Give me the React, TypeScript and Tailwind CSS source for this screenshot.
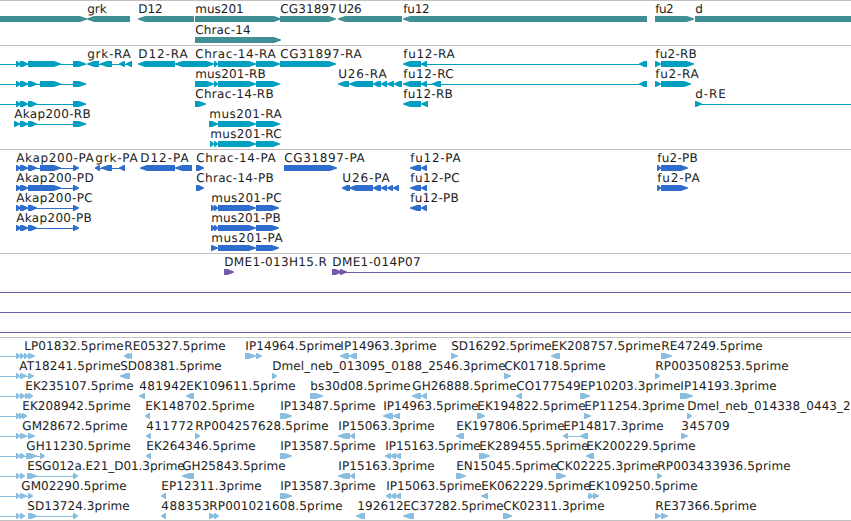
import React from 'react';

type Block = [number, number];

interface Feature {
  name?: string;
  // label start and end
  at?: Block;
  dir?: 'fwd' | 'rev';
  blocks?: Block[];
  line?: Block;
}

interface Track {
  id: string;
  color: string;
  rowClass: string;
  padClass: string;
  rows: Feature[][];
}

const fwd = (name: string, from: number, to: number, blocks: Block[], line?: Block): Feature => ({
  name,
  at: [from, to],
  dir: 'fwd',
  blocks,
  line,
});

const rev = (name: string, from: number, to: number, blocks: Block[], line?: Block): Feature => ({
  name,
  at: [from, to],
  dir: 'rev',
  blocks,
  line,
});

// Exons shared by several transcripts
const MUS: Block[] = [[218, 256], [256, 280]];
const MUS_CDS: Block[] = [[218, 256], [256, 279]];

const genes: Feature[][] = [
  [
    fwd('', 0, 0, [[0, 87]]),
    rev('grk', 87, 106, [[87, 130]]),
    rev('D12', 138, 162, [[138, 194]]),
    fwd('mus201', 195, 243, [[195, 281]]),
    fwd('CG31897', 280, 336, [[280, 336]]),
    rev('U26', 338, 361, [[338, 402]]),
    rev('fu12', 403, 429, [[403, 647]]),
    fwd('fu2', 655, 673, [[655, 694]]),
    fwd('d', 695, 703, [[695, 870]]),
  ],
  [fwd('Chrac-14', 195, 250, [[195, 281]])],
];

const transcripts: Feature[][] = [
  [
    fwd('', 0, 0, [[16, 21], [20, 28], [28, 61], [73, 86]], [0, 86]),
    rev('grk-RA', 87, 130, [[87, 99], [100, 112], [119, 125], [126, 132]], [95, 132]),
    rev('D12-RA', 138, 187, [[138, 175], [175, 196]]),
    fwd('Chrac-14-RA', 195, 275, [[195, 214], [214, 218], ...MUS]),
    fwd('CG31897-RA', 280, 361, [[280, 336]]),
    rev('fu12-RA', 403, 454, [[403, 421], [421, 427]], [421, 647]),
    rev('', 0, 0, [[639, 647]]),
    fwd('fu2-RB', 655, 696, [[655, 661], [661, 694]]),
  ],
  [
    fwd('', 0, 0, [[16, 21], [20, 28], [28, 37], [40, 61], [73, 86]], [0, 86]),
    fwd('mus201-RB', 195, 265, [[195, 214], [214, 218], ...MUS]),
    rev('U26-RA', 338, 386, [[338, 349], [349, 373], [373, 381], [381, 387], [387, 394], [394, 402]]),
    rev('fu12-RC', 403, 453, [[403, 421], [421, 427], [432, 441], [639, 647]], [421, 647]),
    fwd('fu2-RA', 655, 698, [[655, 661], [661, 691]]),
  ],
  [
    fwd('', 0, 0, [[16, 21], [20, 28], [28, 37], [73, 86]], [0, 86]),
    fwd('Chrac-14-RB', 195, 273, [[195, 206]]),
    rev('fu12-RB', 403, 452, [[403, 421], [421, 428]]),
    fwd('d-RE', 695, 725, [[695, 702]], [695, 851]),
  ],
  [
    fwd('Akap200-RB', 14, 90, [[14, 20], [20, 28], [28, 37], [73, 86]], [14, 86]),
    fwd('mus201-RA', 209, 281, [[209, 218], ...MUS]),
  ],
  [fwd('mus201-RC', 210, 281, [[210, 214], [214, 218], ...MUS])],
];

const proteins: Feature[][] = [
  [
    fwd('Akap200-PA', 16, 93, [[16, 21], [20, 28], [28, 37], [40, 61], [73, 79]], [16, 78]),
    rev('grk-PA', 95, 137, [[95, 100], [101, 112], [119, 125]], [95, 125]),
    rev('D12-PA', 140, 188, [[140, 175], [175, 192]]),
    fwd('Chrac-14-PA', 196, 275, [[196, 204]]),
    fwd('CG31897-PA', 284, 364, [[284, 337]]),
    rev('fu12-PA', 410, 460, [[410, 421], [421, 427]]),
    fwd('fu2-PB', 657, 697, [[657, 661], [661, 688]]),
  ],
  [
    fwd('Akap200-PD', 16, 93, [[16, 21], [20, 28], [28, 61], [73, 79]], [16, 78]),
    fwd('Chrac-14-PB', 196, 273, [[196, 204]]),
    rev('U26-PA', 342, 389, [[342, 350], [349, 373], [373, 381], [381, 387], [387, 393], [393, 399]]),
    rev('fu12-PC', 410, 459, [[410, 421], [421, 427]]),
    fwd('fu2-PA', 657, 699, [[657, 661], [661, 688]]),
  ],
  [
    fwd('Akap200-PC', 16, 92, [[16, 21], [20, 28], [28, 37], [73, 79]], [16, 78]),
    fwd('mus201-PC', 211, 281, [[211, 215], [214, 218], ...MUS_CDS]),
    rev('fu12-PB', 410, 458, [[410, 421], [421, 427]]),
  ],
  [
    fwd('Akap200-PB', 16, 91, [[16, 21], [20, 28], [28, 37], [73, 79]], [16, 78]),
    fwd('mus201-PB', 211, 280, [[211, 215], [214, 218], ...MUS_CDS]),
  ],
  [fwd('mus201-PA', 211, 282, [[211, 218], ...MUS_CDS])],
];

const clones: Feature[][] = [
  [
    fwd('DME1-013H15.R', 224, 326, [[224, 234]]),
    fwd('DME1-014P07', 332, 420, [[332, 342], [340, 347]], [340, 851]),
  ],
  [{ line: [0, 851] }],
  [{ line: [0, 851] }],
  [{ line: [0, 851] }],
];

const ests: Feature[][] = [
  [
    fwd('LP01832.5prime', 24, 123, [[16, 20], [20, 24], [24, 28], [28, 35]], [0, 33]),
    rev('RE05327.5prime', 124, 225, [[124, 129], [127, 132]]),
    fwd('IP14964.5prime', 245, 341, [[245, 256], [256, 262]]),
    rev('IP14963.3prime', 340, 436, [[340, 349], [349, 357]]),
    fwd('SD16292.5prime', 451, 551, [[451, 458]]),
    rev('EK208757.5prime', 551, 660, [[551, 560]]),
    fwd('RE47249.5prime', 661, 762, [[661, 672]]),
  ],
  [
    fwd('AT18241.5prime', 19, 120, [[16, 20], [20, 27], [28, 34]], [0, 33]),
    rev('SD08381.5prime', 120, 221, [[120, 130]]),
    fwd('Dmel_neb_013095_0188_2546.3prime', 272, 505, [[272, 277]]),
    fwd('CK01718.5prime', 504, 605, [[504, 511]]),
    fwd('RP003508253.5prime', 655, 788, [[655, 660]]),
  ],
  [
    fwd('EK235107.5prime', 25, 133, [[16, 20], [20, 25], [25, 29], [28, 33]], [0, 32]),
    rev('481942', 139, 186, [[139, 145]]),
    rev('EK109611.5prime', 186, 295, [[186, 194]]),
    fwd('bs30d08.5prime', 310, 410, [[310, 323]]),
    rev('GH26888.5prime', 412, 516, [[412, 421], [421, 427]]),
    rev('CO177549', 516, 580, [[516, 522]]),
    fwd('EP10203.3prime', 580, 680, [[580, 590]]),
    fwd('IP14193.3prime', 680, 776, [[680, 693]]),
  ],
  [
    fwd('EK208942.5prime', 22, 130, [[16, 20], [19, 23], [22, 27]], [0, 26]),
    rev('EK148702.5prime', 145, 254, [[145, 150]]),
    fwd('IP13487.5prime', 280, 375, [[280, 292]]),
    rev('IP14963.5prime', 383, 478, [[383, 393], [393, 400]]),
    fwd('EK194822.5prime', 477, 585, [[477, 485]]),
    fwd('EP11254.3prime', 584, 684, [[584, 591]]),
    fwd('Dmel_neb_014338_0443_2', 687, 850, [[687, 692]]),
  ],
  [
    fwd('GM28672.5prime', 22, 127, [[16, 20], [20, 27], [28, 35]], [0, 33]),
    rev('411772', 146, 193, [[146, 151]]),
    fwd('RP004257628.5prime', 195, 328, [[195, 200]]),
    rev('IP15063.3prime', 338, 434, [[338, 350], [350, 355]]),
    rev('EK197806.5prime', 456, 564, [[456, 464]]),
    rev('EP14817.3prime', 563, 663, [[563, 568], [580, 588]], [563, 588]),
    fwd('345709', 681, 729, [[681, 688]]),
  ],
  [
    fwd('GH11230.5prime', 26, 130, [[16, 20], [20, 25], [26, 37], [40, 45]], [0, 43]),
    rev('EK264346.5prime', 146, 255, [[146, 151]]),
    fwd('IP13587.5prime', 280, 375, [[280, 292]]),
    rev('IP15163.5prime', 385, 480, [[385, 391], [390, 396], [395, 401]]),
    fwd('EK289455.5prime', 479, 588, [[479, 490]]),
    rev('EK200229.5prime', 586, 695, [[586, 594]]),
  ],
  [
    fwd('', 0, 0, [[16, 20], [20, 25]], [0, 23]),
    fwd('ESG012a.E21_D01.3prime', 27, 184, [[27, 37], [73, 78]], [27, 77]),
    rev('GH25843.5prime', 182, 285, [[182, 194]]),
    rev('IP15163.3prime', 338, 434, [[338, 350], [350, 355]]),
    fwd('EN15045.5prime', 456, 557, [[456, 466]]),
    fwd('CK02225.3prime', 556, 658, [[556, 566]]),
    fwd('RP003433936.5prime', 657, 790, [[657, 662]]),
  ],
  [
    fwd('GM02290.5prime', 21, 126, [[16, 20], [20, 27], [28, 33]], [0, 32]),
    rev('EP12311.3prime', 161, 261, [[161, 166]]),
    fwd('IP13587.3prime', 280, 375, [[280, 292]]),
    rev('IP15063.5prime', 386, 481, [[386, 391], [390, 396], [395, 401]]),
    rev('EK062229.5prime', 481, 590, [[481, 488]]),
    fwd('EK109250.5prime', 588, 697, [[588, 594], [593, 599]]),
  ],
  [
    fwd('', 0, 0, [[16, 20], [20, 25]], [0, 23]),
    fwd('SD13724.3prime', 27, 129, [[28, 37], [73, 78]], [28, 77]),
    rev('488353', 161, 209, [[161, 166]]),
    fwd('RP001021608.5prime', 209, 342, [[209, 215], [214, 219]]),
    rev('192612', 357, 403, [[356, 365]]),
    rev('EC37282.5prime', 403, 503, [[403, 414]]),
    fwd('CK02311.3prime', 503, 604, [[503, 512]]),
    fwd('RE37366.5prime', 655, 756, [[655, 661], [661, 668]]),
  ],
];

const tracks: Track[] = [
  { id: 'genes', color: '#3f8f95', rowClass: 'h-[21px]', padClass: 'pb-[2px]', rows: genes },
  { id: 'transcripts', color: '#009fc0', rowClass: 'h-5', padClass: 'pb-[3px]', rows: transcripts },
  { id: 'proteins', color: '#2f6dcd', rowClass: 'h-5', padClass: 'pb-[3px]', rows: proteins },
  { id: 'clones', color: '#7459a9', rowClass: 'h-5', padClass: 'pb-[3px]', rows: clones },
  { id: 'ests', color: '#88bddf', rowClass: 'h-5', padClass: 'pb-[2px]', rows: ests },
];

// Box with a pointed end, or a blunt triangle when the block is short
function arrow([x1, x2]: Block, dir: 'fwd' | 'rev') {
  const w = x2 - x1;
  const tip = Math.min(7, w <= 7 ? w - 1 : w * 0.65);
  return dir === 'fwd'
    ? `${x1},15 ${x2 - tip},15 ${x2},17.5 ${x2},18.5 ${x2 - tip},21 ${x1},21`
    : `${x2},15 ${x1 + tip},15 ${x1},17.5 ${x1},18.5 ${x1 + tip},21 ${x2},21`;
}

function FeatureGlyph({ feature }: { feature: Feature }) {
  const { name, at, dir = 'fwd', blocks = [], line } = feature;

  return (
    <g>
      {line && (
        <rect x={line[0]} y={18} width={line[1] - line[0]} height={1} shapeRendering="crispEdges" />
      )}
      {blocks.map((block) => (
        <polygon key={block.join('-')} points={arrow(block, dir)} />
      ))}
      {name && at && (
        <text
          x={at[0] + 0.25}
          y={12}
          textLength={at[1] - at[0] + 0.5}
          textRendering="geometricPrecision"
          className="fill-[#1c1c1c] text-[12px]"
        >
          {name}
        </text>
      )}
    </g>
  );
}

export default function App() {
  return (
    <div className="flex h-[521px] w-[851px] flex-col overflow-hidden border-b border-[#c0c0c0] bg-white font-['DejaVu_Sans',sans-serif]">
      {tracks.map((track) => (
        <section key={track.id} className={`flex flex-col border-t border-[#c0c0c0] ${track.padClass}`}>
          {track.rows.map((row, i) => (
            <svg
              key={i}
              width="851"
              fill={track.color}
              className={`block shrink-0 overflow-visible ${track.rowClass}`}
            >
              {row.map((feature, j) => (
                <FeatureGlyph key={j} feature={feature} />
              ))}
            </svg>
          ))}
        </section>
      ))}
    </div>
  );
}
